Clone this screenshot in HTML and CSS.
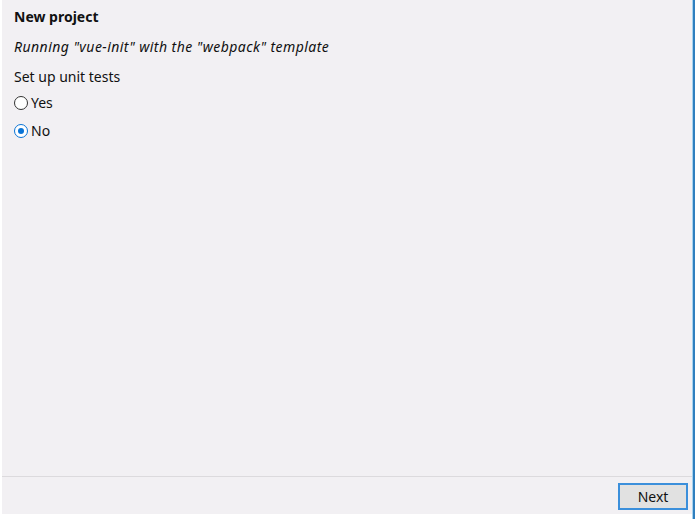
FILE: index.html
```html
<!DOCTYPE html>
<html>
<head>
<meta charset="utf-8">
<link rel="stylesheet" href="styles.css">
</head>
<body>
<div class="window">
  <div class="panel">
    <div class="content">
      <div class="title">New project</div>
      <div class="subtitle">Running "vue-init" with the "webpack" template</div>
      <div class="question">Set up unit tests</div>
      <label class="option"><span class="radio"></span>Yes</label>
      <label class="option"><span class="radio checked"></span>No</label>
    </div>
    <div class="footer">
      <button class="next">Next</button>
    </div>
  </div>
  <div class="edge"></div>
</div>
</body>
</html>
```
FILE: styles.css
```css
html, body {
  margin: 0;
  padding: 0;
  background: #ffffff;
}
.window {
  width: 697px;
  height: 519px;
  display: flex;
  background: #ffffff;
  font-family: "Noto Sans", "Open Sans", sans-serif;
  font-size: 14px;
  color: #111;
}
.panel {
  margin-left: 2px;
  width: 690px;
  height: 514px;
  background: #f2f0f3;
  display: flex;
  flex-direction: column;
}
.edge {
  width: 3px;
  height: 519px;
  border-left: 1px solid #a6d2ef;
  box-sizing: border-box;
  border-right: 2px solid #2f7fbf;
}
.content {
  flex: 1;
  padding: 6px 0 0 12px;
  display: flex;
  flex-direction: column;
}
.title {
  font-weight: bold;
  height: 22px;
  line-height: 22px;
}
.subtitle {
  font-style: italic;
  letter-spacing: 0.45px;
  margin-top: 9px;
  height: 20px;
  line-height: 20px;
}
.question {
  margin-top: 10px;
  height: 20px;
  line-height: 20px;
}
.option {
  display: flex;
  align-items: center;
  margin-top: 6px;
  height: 20px;
  line-height: 20px;
}
.option + .option { margin-top: 8px; }
.radio {
  width: 14px;
  height: 14px;
  box-sizing: border-box;
  border: 1px solid #333;
  border-radius: 50%;
  margin-right: 3px;
  background: #fff;
  position: relative;
}
.radio.checked {
  border-color: #0a74d6;
}
.radio.checked::after {
  content: "";
  position: absolute;
  left: 3px;
  top: 3px;
  width: 6px;
  height: 6px;
  border-radius: 50%;
  background: #0a74d6;
}
.footer {
  box-sizing: border-box;
  height: 38px;
  border-top: 1px solid #dcdadd;
  display: flex;
  justify-content: flex-end;
  align-items: flex-start;
  padding: 6px 4px 0 0;
}
.next {
  width: 70px;
  height: 27px;
  background: #e1e1e1;
  border: 2px solid #3b8fdb;
  font-family: "Noto Sans", "Open Sans", sans-serif;
  font-size: 14px;
  color: #111;
  padding: 0;
  margin: 0;
}
```
